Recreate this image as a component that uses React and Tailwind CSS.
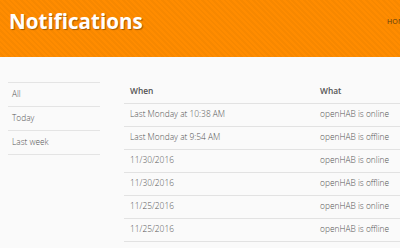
const rows = [
  { when: 'Last Monday at 10:38 AM', what: 'openHAB is online' },
  { when: 'Last Monday at 9:54 AM', what: 'openHAB is offline' },
  { when: '11/30/2016', what: 'openHAB is online' },
  { when: '11/30/2016', what: 'openHAB is offline' },
  { when: '11/25/2016', what: 'openHAB is online' },
  { when: '11/25/2016', what: 'openHAB is offline' },
]

const filters = ['All', 'Today', 'Last week']

export default function App() {
  return (
    <div className="w-[400px] h-[248px] overflow-hidden bg-[#fafafa] font-['Open_Sans',sans-serif]">
      <header className="h-[57px] flex items-start justify-between bg-[#ff8c00] bg-[repeating-linear-gradient(45deg,#ff8c00_0px,#ff8c00_2px,#f78800_2px,#f78800_4px)]">
        <h1 className="ml-[9px] mt-[7px] text-[20.6px] leading-[28px] font-bold text-white [text-shadow:1px_1px_1px_rgba(0,0,0,0.35)]">
          Notifications
        </h1>
        <nav className="mt-[17px] ml-[2px] text-[7px] tracking-wide text-[#5a3a10] whitespace-nowrap w-[13px] overflow-hidden">
          HOME
        </nav>
      </header>
      <div className="flex pt-[25px]">
        <ul className="shrink-0 ml-[8px] w-[92px] border-t border-[#e4e4e4]">
          {filters.map((f) => (
            <li key={f} className="h-[24px] flex items-center pl-[4px] text-[8.3px] font-light text-[#555] border-b border-[#e4e4e4]">
              {f}
            </li>
          ))}
        </ul>
        <table className="shrink-0 ml-[24px] -mt-[1px] w-[276px] table-fixed border-collapse text-[8.4px] font-light text-[#555]">
          <thead>
            <tr className="h-[22px] border-b border-[#e2e2e2]">
              <th className="pl-[6px] text-left font-semibold text-[#555] w-[196px]">When</th>
              <th className="text-left font-semibold text-[#555]">What</th>
            </tr>
          </thead>
          <tbody>
            {rows.map((r, i) => (
              <tr key={i} className="h-[23px] border-b border-[#e2e2e2]">
                <td className="pl-[6px]">{r.when}</td>
                <td className="whitespace-nowrap">{r.what}</td>
              </tr>
            ))}
          </tbody>
        </table>
      </div>
    </div>
  )
}
